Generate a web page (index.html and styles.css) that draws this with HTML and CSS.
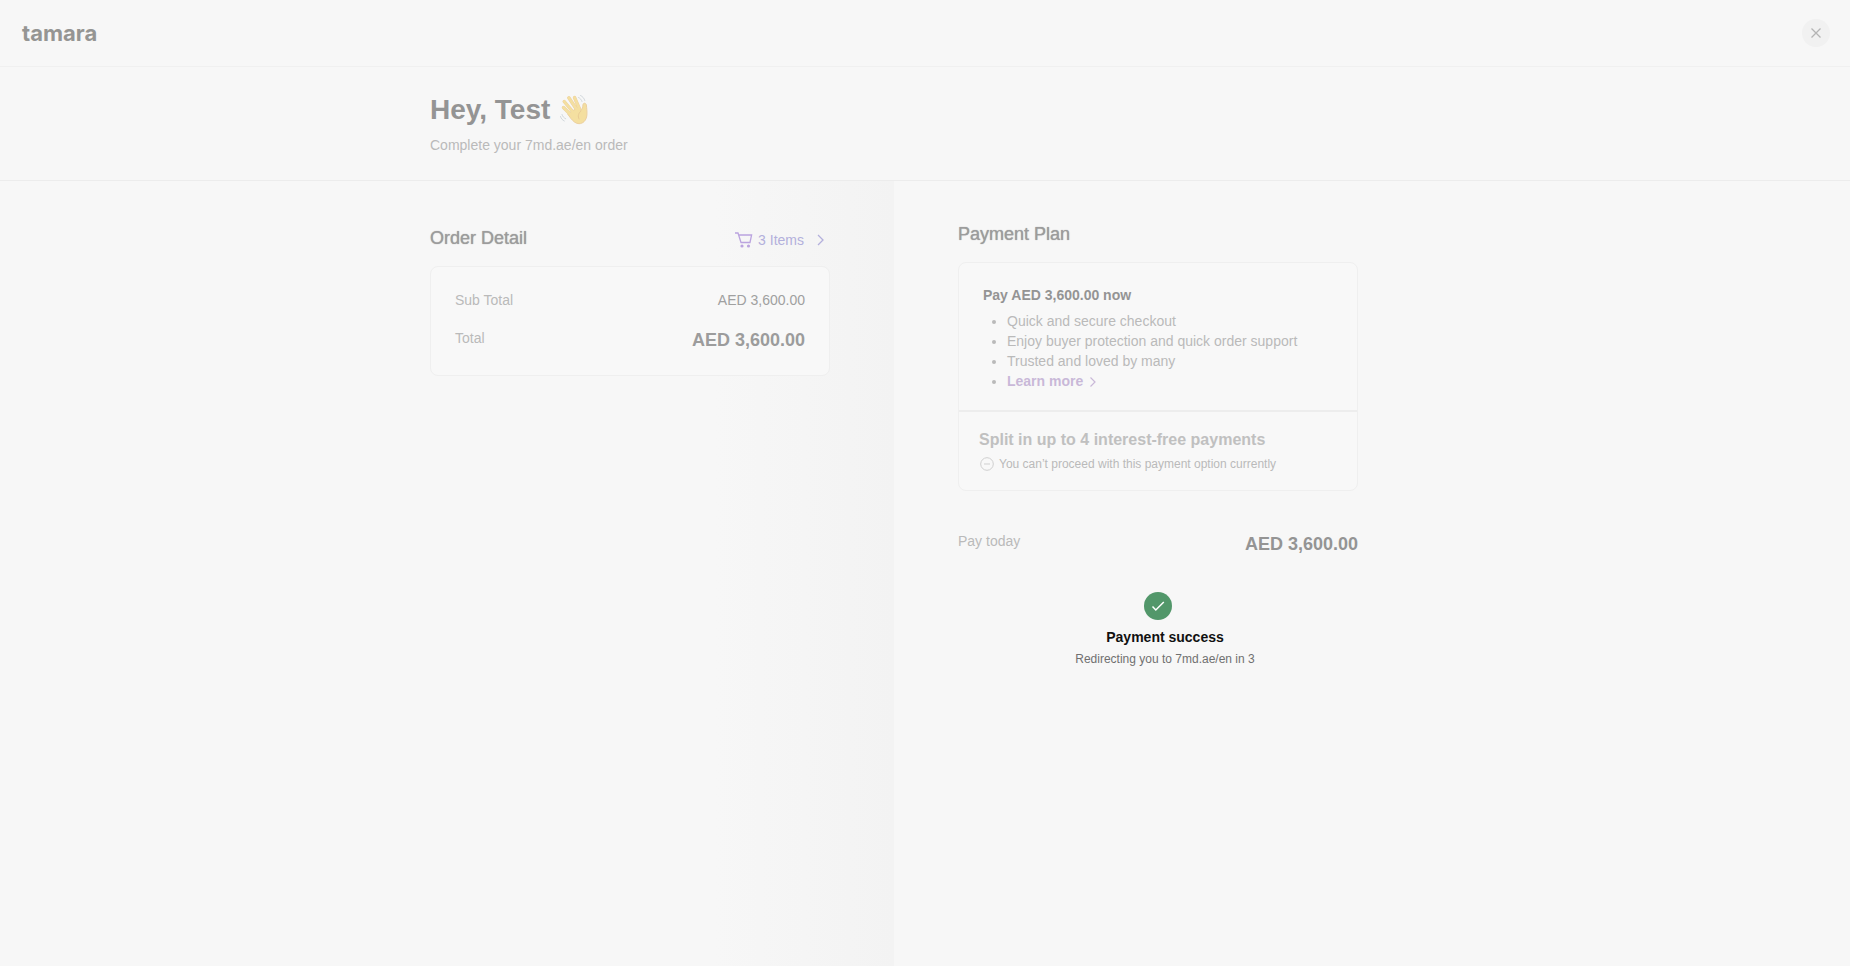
FILE: index.html
```html
<!DOCTYPE html>
<html lang="en">
<head>
<meta charset="utf-8">
<meta name="viewport" content="width=device-width, initial-scale=1">
<title>Tamara checkout</title>
<link rel="stylesheet" href="styles.css">
</head>
<body>
<header class="topbar">
  <span class="logo">tamara</span>
  <button class="close" type="button" aria-label="Close">
    <svg width="10" height="10" viewBox="0 0 10 10" fill="none" stroke="currentColor" stroke-width="1.3"><path d="M0.5 0.5l9 9M9.5 0.5l-9 9"/></svg>
  </button>
</header>
<section class="hero">
  <h1 class="greeting">Hey, Test
    <svg width="28" height="30" viewBox="0 0 28 30" fill="none" stroke-linecap="round" stroke-linejoin="round">
      <path d="M3.500 12.500L12 21M4.200 6.500L13 17M8.800 2.800L17 15M14.500 2.500L19.500 14" stroke="#ecd0a0" stroke-width="3.400"/>
      <path d="M10 17.500L18 12.500L20.500 15.500C22.500 14 22.800 12 23 9.500C23.300 7.700 26 7.800 26.400 10C26.600 13 27.200 16 26.900 20C26.400 25.500 23 28.700 19 28.700C15.500 28.700 13 26 10.500 23L8 19.500Z" fill="#f4dfa0" stroke="#ecd0a0"/>
      <path d="M3.500 12.500L12 21M4.200 6.500L13 17M8.800 2.800L17 15M14.500 2.500L19.500 14" stroke="#f4dfa0" stroke-width="2.600"/>
      <path d="M10 19L18 14L22 20L18 26L13 24Z" fill="#f4dfa0"/>
      <path d="M21 16c-2.500 2-3.500 5-2 8" stroke="#e8cb94"/>
      <path d="M18.500 2.500c1.800.8 3 2.300 3.500 4M20.500.5c2.200 1 3.700 2.800 4.300 5M2 19.500c.6 2 1.900 3.500 3.700 4.300M.5 21.500c.6 2 1.800 3.600 3.800 4.500" stroke="#d2d8dc"/>
    </svg>
  </h1>
  <p class="subtitle">Complete your 7md.ae/en order</p>
</section>
<main class="columns">
  <section class="order">
    <div class="panel">
      <div class="order-head">
        <h2 class="title">Order Detail</h2>
        <button class="items" type="button">
          <svg width="18" height="16" viewBox="0 0 18 16" fill="none" stroke="#bba4df" stroke-width="1.3"><path d="M0 1h3l3 9.500h9l1.600-7.500H3.700"/><circle cx="7" cy="14" r="1.600" fill="#bba4df" stroke="none"/><circle cx="13.500" cy="14" r="1.600" fill="#bba4df" stroke="none"/></svg>
          <span class="items-label">3 Items</span>
          <svg width="7" height="12" viewBox="0 0 7 12" fill="none" stroke="currentColor" stroke-width="1.3"><path d="M1 1l5 5-5 5"/></svg>
        </button>
      </div>
      <dl class="card totals">
        <div class="row"><dt>Sub Total</dt><dd class="sum">AED 3,600.00</dd></div>
        <div class="row"><dt>Total</dt><dd class="total">AED 3,600.00</dd></div>
      </dl>
    </div>
  </section>
  <section class="payment">
    <div class="panel">
      <h2 class="title">Payment Plan</h2>
      <div class="card plans">
        <div class="plan">
          <h3 class="plan-title">Pay AED 3,600.00 now</h3>
          <ul class="perks">
            <li>Quick and secure checkout</li>
            <li>Enjoy buyer protection and quick order support</li>
            <li>Trusted and loved by many</li>
            <li><a class="learn" href="#">Learn more<svg class="learn-arrow" width="6" height="10" viewBox="0 0 6 10" fill="none" stroke="currentColor" stroke-width="1.2"><path d="M.5.5L5 5 .5 9.500"/></svg></a></li>
          </ul>
        </div>
        <div class="split">
          <h3 class="split-title">Split in up to 4 interest-free payments</h3>
          <p class="note">
            <svg width="14" height="14" viewBox="0 0 14 14" fill="none" stroke="#cfcfcf"><circle cx="7" cy="7" r="6.300"/><path d="M4 7h6"/></svg>
            You can’t proceed with this payment option currently
          </p>
        </div>
      </div>
      <div class="today"><span>Pay today</span><strong class="due">AED 3,600.00</strong></div>
      <div class="status" role="status">
        <svg width="28" height="28" viewBox="0 0 28 28" fill="none"><circle cx="14" cy="14" r="14" fill="#52976a"/><path d="M8.500 14.500l3.300 3.500 8-8" stroke="#fff" stroke-width="1.5"/></svg>
        <p class="success">Payment success</p>
        <p class="redirect">Redirecting you to 7md.ae/en in 3</p>
      </div>
    </div>
  </section>
</main>
</body>
</html>
```
FILE: styles.css
```css
* { box-sizing: border-box; }
body, h1, h2, h3, p, ul, dl, dd { margin: 0; }
body {
  min-height: 100vh;
  display: flex;
  flex-direction: column;
  background: #f7f7f7;
  color: #bababa;
  font: 14px/20px "Liberation Sans", Arial, sans-serif;
}
button { border: 0; padding: 0; background: none; font: inherit; cursor: pointer; }
svg { flex: none; }
.topbar {
  display: flex;
  align-items: center;
  justify-content: space-between;
  height: 67px;
  padding: 0 20px 0 22px;
  border-bottom: 1px solid #f0f0f0;
}
.logo { font: 700 22px/28px "Inter", sans-serif; color: #959593; }
.close {
  display: flex;
  align-items: center;
  justify-content: center;
  width: 28px;
  height: 28px;
  border-radius: 50%;
  background: #f1f1f1;
  color: #b4b4b4;
}
.hero {
  padding: 25px 24px 25px calc(50% - 495px);
  border-bottom: 1px solid #ececec;
}
.greeting { display: flex; gap: 10px; align-items: center; font-size: 28px; line-height: 36px; color: #949494; }
.subtitle { margin-top: 7px; }
.columns { flex: 1; display: grid; grid-template-columns: calc(50% - 31px) 1fr; }
.order {
  display: flex;
  justify-content: flex-end;
  padding: 45px 64px 40px;
  background: linear-gradient(to right, #f7f7f7 80%, #f3f3f3);
}
.payment { padding: 41px 64px 40px; }
.panel { width: 100%; max-width: 400px; }
.title { font-size: 18px; line-height: 24px; font-weight: 400; color: #9c9c9c; text-shadow: 0 0 1px #9c9c9c; }
.order-head { display: flex; align-items: flex-end; justify-content: space-between; padding-right: 6px; }
.items { display: flex; align-items: center; color: #b3b0dc; }
.items-label { margin: 0 13px 0 5px; }
.card { border: 1px solid #efefef; border-radius: 8px; background: #f8f8f8; }
.totals { display: flex; flex-direction: column; gap: 18px; margin-top: 16px; padding: 23px 24px; }
.row { display: flex; justify-content: space-between; }
.sum { color: #a0a0a0; }
.total { font-size: 18px; line-height: 24px; font-weight: 700; color: #9c9c9c; }
.plans { margin-top: 16px; }
.plan { padding: 22px 24px 19px; border-bottom: 2px solid #ededed; }
.plan-title { font-size: 14px; color: #949494; }
.perks { margin-top: 6px; padding-left: 24px; }
.learn { color: #c9b8d8; font-weight: 700; text-decoration: none; }
.learn-arrow { margin-left: 7px; vertical-align: -1px; }
.split { padding: 18px 20px 16px; }
.split-title { font-size: 16px; line-height: 20px; font-weight: 700; color: #c0c0c0; }
.note { display: flex; align-items: center; gap: 5px; margin-top: 4px; padding-left: 1px; font-size: 12px; }
.today { display: flex; justify-content: space-between; margin-top: 40px; }
.due { font-size: 18px; line-height: 26px; color: #949494; }
.status { display: flex; flex-direction: column; align-items: center; margin-top: 35px; }
.success { margin: 7px 0 2px; padding-left: 14px; font-weight: 700; color: #111; }
.redirect { padding-left: 14px; font-size: 12px; color: #707070; }
```
